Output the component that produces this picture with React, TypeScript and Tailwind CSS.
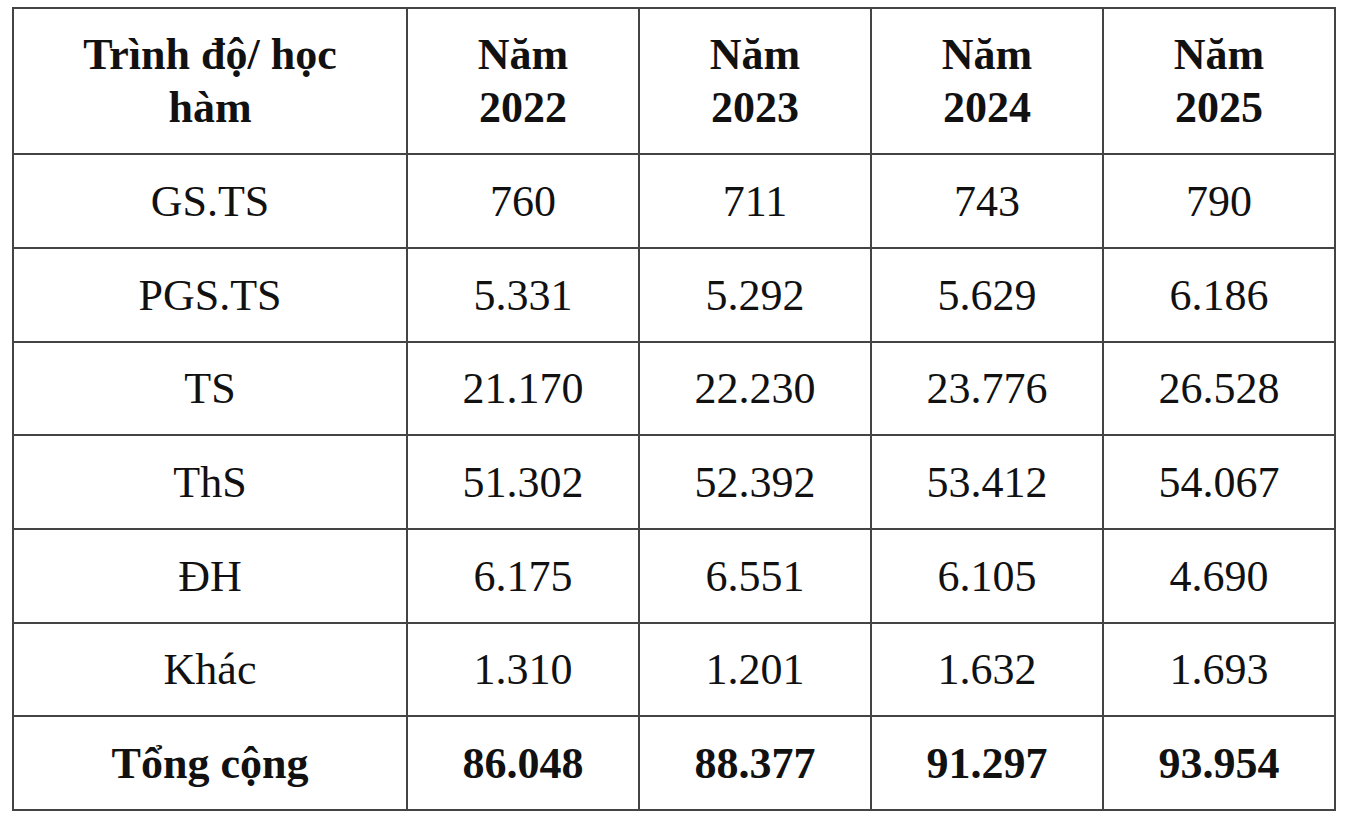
const years = ['2022', '2023', '2024', '2025'];

const rows: { label: string; values: string[]; h: string }[] = [
  { label: 'GS.TS', values: ['760', '711', '743', '790'], h: 'h-[94px]' },
  { label: 'PGS.TS', values: ['5.331', '5.292', '5.629', '6.186'], h: 'h-[94px]' },
  { label: 'TS', values: ['21.170', '22.230', '23.776', '26.528'], h: 'h-[93px]' },
  { label: 'ThS', values: ['51.302', '52.392', '53.412', '54.067'], h: 'h-[94px]' },
  { label: 'ĐH', values: ['6.175', '6.551', '6.105', '4.690'], h: 'h-[94px]' },
  { label: 'Khác', values: ['1.310', '1.201', '1.632', '1.693'], h: 'h-[93px]' },
];

const total = ['86.048', '88.377', '91.297', '93.954'];

const cell = 'border-2 border-[#444] text-center align-middle p-0';

export default function App() {
  return (
    <div className="min-h-[826px] w-[1354px] bg-white pl-[12px] pt-[7px]">
      <table
        className="w-[1323px] table-fixed border-collapse text-[44px] text-[#111] leading-[53px]"
        style={{ fontFamily: '"Liberation Serif", "Times New Roman", serif' }}
      >
        <colgroup>
          <col className="w-[394px]" />
          <col className="w-[232px]" />
          <col className="w-[232px]" />
          <col className="w-[232px]" />
          <col className="w-[232px]" />
        </colgroup>
        <thead>
          <tr className="h-[146px] font-bold">
            <th className={cell}>
              Trình độ/ học
              <br />
              hàm
            </th>
            {years.map((y) => (
              <th key={y} className={cell}>
                Năm
                <br />
                {y}
              </th>
            ))}
          </tr>
        </thead>
        <tbody>
          {rows.map((r) => (
            <tr key={r.label} className={r.h}>
              <td className={cell}>{r.label}</td>
              {r.values.map((v, i) => (
                <td key={i} className={cell}>
                  {v}
                </td>
              ))}
            </tr>
          ))}
          <tr className="h-[94px] font-bold">
            <td className={cell}>Tổng cộng</td>
            {total.map((v) => (
              <td key={v} className={cell}>
                {v}
              </td>
            ))}
          </tr>
        </tbody>
      </table>
    </div>
  );
}
